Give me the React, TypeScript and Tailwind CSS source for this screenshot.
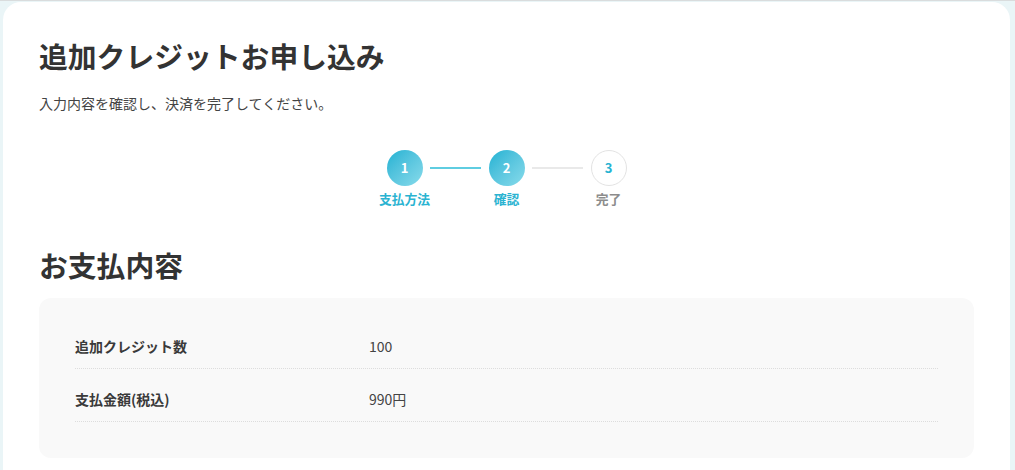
import React from "react";

const font = { fontFamily: '"Noto Sans CJK JP", "Noto Sans", sans-serif' };

function Step({ n, label, state }: { n: number; label: string; state: "done" | "current" | "todo" }) {
  const active = state !== "todo";
  return (
    <div className="flex w-[36px] flex-col items-center">
      <div
        className={
          active
            ? "flex h-[36px] w-[36px] items-center justify-center rounded-full bg-gradient-to-br from-[#17b2d3] to-[#86dbeb] text-[13px] font-bold text-white"
            : "flex h-[36px] w-[36px] items-center justify-center rounded-full border border-[#e3e3e3] bg-white text-[13px] font-bold text-[#27b3d2]"
        }
      >
        {n}
      </div>
      <div
        className={
          "mt-[3px] whitespace-nowrap text-[12.8px] font-bold leading-[1.5] " +
          (active ? "text-[#2ab3d1]" : "text-[#8c8c8c]")
        }
      >
        {label}
      </div>
    </div>
  );
}

export default function App() {
  return (
    <div style={font} className="min-h-[470px] border-t border-[#d9dcdd] bg-[#eaf5f7] pl-[3px] pr-[5px] pt-[1px]">
      <div className="min-h-[469px] rounded-t-[18px] bg-white px-9 pt-8">
        <h1 className="text-[28.8px] font-bold leading-[1.5] text-[#333]">追加クレジットお申し込み</h1>
        <p className="mt-4 text-[14px] leading-[1.5] text-[#444]">入力内容を確認し、決済を完了してください。</p>

        <div className="mt-9 flex justify-center">
          <div className="flex items-start">
            <Step n={1} label="支払方法" state="done" />
            <div className="mx-[7.5px] mt-[17px] h-[2px] w-[51px] bg-[#5fcde1]" />
            <Step n={2} label="確認" state="current" />
            <div className="mx-[7.5px] mt-[17px] h-[2px] w-[51px] bg-[#e9e9e9]" />
            <Step n={3} label="完了" state="todo" />
          </div>
        </div>

        <h2 className="mt-[35px] text-[28.8px] font-bold leading-[1.5] text-[#333]">お支払内容</h2>

        <div className="mt-[11px] rounded-[12px] bg-[#f9f9f9] px-9 pb-9 pt-[18px]">
          <div className="grid grid-cols-[294px_1fr] border-b border-dotted border-[#dddddd] pb-[11px] pt-[20px] text-[14px] leading-[1.5]">
            <div className="font-bold text-[#3a3a3a]">追加クレジット数</div>
            <div className="text-[#444]">100</div>
          </div>
          <div className="grid grid-cols-[294px_1fr] border-b border-dotted border-[#dddddd] pb-[11px] pt-[20px] text-[14px] leading-[1.5]">
            <div className="font-bold text-[#3a3a3a]">支払金額(税込)</div>
            <div className="text-[#444]">990円</div>
          </div>
        </div>
      </div>
    </div>
  );
}
